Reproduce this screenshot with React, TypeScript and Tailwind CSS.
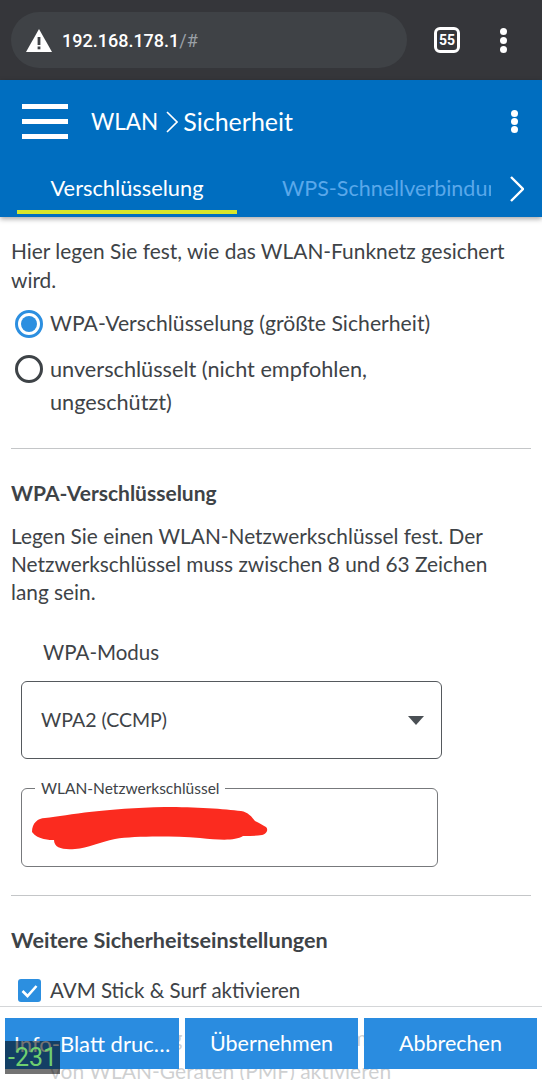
import React from 'react';

const Dots = ({ className }: { className: string }) => (
  <div className={`flex flex-col items-center ${className}`}>
    <div className="w-[7px] h-[7px] rounded-full bg-white"></div>
    <div className="w-[7px] h-[7px] rounded-full bg-white"></div>
    <div className="w-[7px] h-[7px] rounded-full bg-white"></div>
  </div>
);

const App: React.FC = () => {
  return (
    <div className="relative h-[1080px] w-[542px] overflow-hidden bg-white text-[#3e4347] text-[21px] font-['Lato','Noto_Sans',sans-serif]">
      {/* Browser bar */}
      <div className="h-20 bg-[#35363a] flex items-center pl-[11px]">
        <div className="w-[396px] h-14 rounded-full bg-[#3f4246] flex items-center pl-[15px]">
          <svg width="26" height="23" viewBox="0 0 26 23">
            <path d="M13 0 L26 23 L0 23 Z" fill="#fff" />
            <rect x="11.6" y="8" width="2.8" height="8" fill="#3f4246" />
            <rect x="11.6" y="17.5" width="2.8" height="2.8" fill="#3f4246" />
          </svg>
          <span className="ml-[10px] text-[18px] font-medium text-white font-['Roboto',sans-serif]">
            192.168.178.1<span className="text-[#9aa0a6] font-normal">/#</span>
          </span>
        </div>
        <div className="ml-[27px] w-[26px] h-[26px] rounded-[6px] border-[3px] border-white flex items-center justify-center text-white text-[14px] font-bold font-['Roboto',sans-serif]">
          55
        </div>
        <Dots className="ml-[40px] gap-[2px]" />
      </div>

      {/* Blue header */}
      <div className="h-[137px] bg-[#006ec0] shadow-[0_2px_5px_rgba(0,0,0,0.35)] text-white relative">
        <div className="flex items-center h-[83px] pl-[22px] pr-[24px]">
          <div className="flex flex-col gap-[10px] w-[46px]">
            <div className="h-[5px] bg-white"></div>
            <div className="h-[5px] bg-white"></div>
            <div className="h-[5px] bg-white"></div>
          </div>
          <div className="ml-[23px] flex items-center text-[25px]">
            <span className="text-[22.5px]">WLAN</span>
            <svg className="ml-[8px] mr-[5px]" width="12" height="22" viewBox="0 0 12 22" fill="none" stroke="#fff" strokeWidth="1.6">
              <path d="M1 1 L11 11 L1 21" />
            </svg>
            <span>Sicherheit</span>
          </div>
          <Dots className="ml-auto gap-[1px]" />
        </div>
        <div className="flex h-[54px] pl-[17px]">
          <div className="w-[220px] h-[51px] border-b-4 border-[#d7e62b] text-[21.8px] text-center pt-[9px]">
            Verschlüsselung
          </div>
          <div className="ml-[45px] w-[209px] overflow-hidden whitespace-nowrap text-[#5aa8ea] pt-[9px] text-[21.5px]">
            WPS-Schnellverbindung
          </div>
          <svg className="ml-[19px] mt-[13px]" width="14" height="26" viewBox="0 0 14 26" fill="none" stroke="#fff" strokeWidth="2.4">
            <path d="M1 1 L13 13 L1 25" />
          </svg>
        </div>
      </div>

      {/* Content */}
      <div className="pl-[11px] pr-[11px] pt-[19px]">
        <p className="leading-[29px] text-[20.9px]">Hier legen Sie fest, wie das WLAN-Funknetz gesichert wird.</p>

        <div className="mt-[15px] flex items-center ml-[4px] h-[29px]">
          <div className="w-7 h-7 rounded-full border-[3px] border-[#2c8fe0] flex items-center justify-center">
            <div className="w-[16px] h-[16px] rounded-full bg-[#2c8fe0]"></div>
          </div>
          <span className="ml-[7px] text-[21.2px]">WPA-Verschlüsselung (größte Sicherheit)</span>
        </div>
        <div className="mt-[17px] flex items-start ml-[4px]">
          <div className="w-7 h-7 shrink-0 rounded-full border-[3px] border-[#3e4347]"></div>
          <span className="ml-[7px] leading-[33px] -mt-[2px] max-w-[400px] text-[21.7px]">unverschlüsselt (nicht empfohlen, ungeschützt)</span>
        </div>

        <div className="mt-[29px] border-t border-[#c4c6c8]"></div>

        <h2 className="mt-[29px] font-bold leading-[29px] text-[21px]">WPA-Verschlüsselung</h2>
        <p className="mt-[15px] leading-[28px] text-[20.85px] max-w-[500px]">
          Legen Sie einen WLAN-Netzwerkschlüssel fest. Der Netzwerkschlüssel muss zwischen 8 und 63 Zeichen lang sein.
        </p>

        <div className="mt-[32px] ml-[32px] leading-[29px] text-[20.5px]">WPA-Modus</div>

        <div className="mt-[14px] ml-[10px] w-[421px] h-[78px] border border-[#55595d] rounded-[6px] flex items-center justify-between pl-[19px] pr-[17px]">
          <span className="text-[19.5px]">WPA2 (CCMP)</span>
          <svg width="16" height="9" viewBox="0 0 16 9">
            <path d="M0 0 H16 L8 9 Z" fill="#4a4f54" />
          </svg>
        </div>

        <fieldset className="mt-[21px] ml-[10px] w-[417px] h-[87px] border border-[#77797c] rounded-[6px] px-[13px]">
          <legend className="px-[6px] text-[15.5px] leading-[16px]">WLAN-Netzwerkschlüssel</legend>
          <svg className="mt-[10px] -ml-[5px]" width="238" height="46" viewBox="0 0 238 46">
            <path
              d="M2 26 C2 17 8 12 15 12 C40 9 75 2 135 1 C165 1 195 3 211 5 C218 6 222 11 225 15 C230 17 234 20 236 21 C239 24 236 28 232 29 C226 30 220 30 213 30 C205 35 190 34 170 32 C140 30 105 30 85 33 C70 36 58 42 45 43 C33 44 24 42 24 34 C20 34 8 34 2 26 Z"
              fill="#fb2b1f"
            />
          </svg>
        </fieldset>

        <div className="mt-[28px] border-t border-[#c4c6c8]"></div>

        <h2 className="mt-[30px] font-bold leading-[29px] text-[21.6px]">Weitere Sicherheitseinstellungen</h2>

        <div className="mt-[21px] flex items-center ml-[7px] h-[29px]">
          <div className="w-[23px] h-[23px] rounded-[3px] bg-[#2c8fe0] flex items-center justify-center">
            <svg width="17" height="14" viewBox="0 0 17 14" fill="none" stroke="#fff" strokeWidth="2.6">
              <path d="M1.5 7 L6.5 12 L15.5 2" />
            </svg>
          </div>
          <span className="ml-[9px] text-[20.5px]">AVM Stick &amp; Surf aktivieren</span>
        </div>
        <p className="mt-[16px] ml-[39px] leading-[33px] max-w-[400px]">
          Unterstützung für geschützte Anmeldung von WLAN-Geräten (PMF) aktivieren
        </p>
      </div>

      {/* Sticky action bar */}
      <div className="absolute bottom-0 left-0 right-0 h-[74px] bg-white/75 border-t border-[#d4d6d8] flex gap-[6px] pl-[5px] pt-[11px] text-[21.5px]">
        <button className="w-[174px] h-[51px] bg-[#2a8ce0] text-white text-center whitespace-nowrap text-[22px]">Info-Blatt druc…</button>
        <button className="w-[173px] h-[51px] bg-[#2a8ce0] text-white text-center">Übernehmen</button>
        <button className="w-[173px] h-[51px] bg-[#2a8ce0] text-white text-center">Abbrechen</button>
      </div>

      {/* Debug badge */}
      <div className="absolute left-[5px] top-[1041px] w-[55px] h-[33px] bg-black/55 text-[#6fcf70] text-[25px] leading-[33px] pl-[3px] font-['Roboto',sans-serif]">
        -231
      </div>
    </div>
  );
};

export default App;
